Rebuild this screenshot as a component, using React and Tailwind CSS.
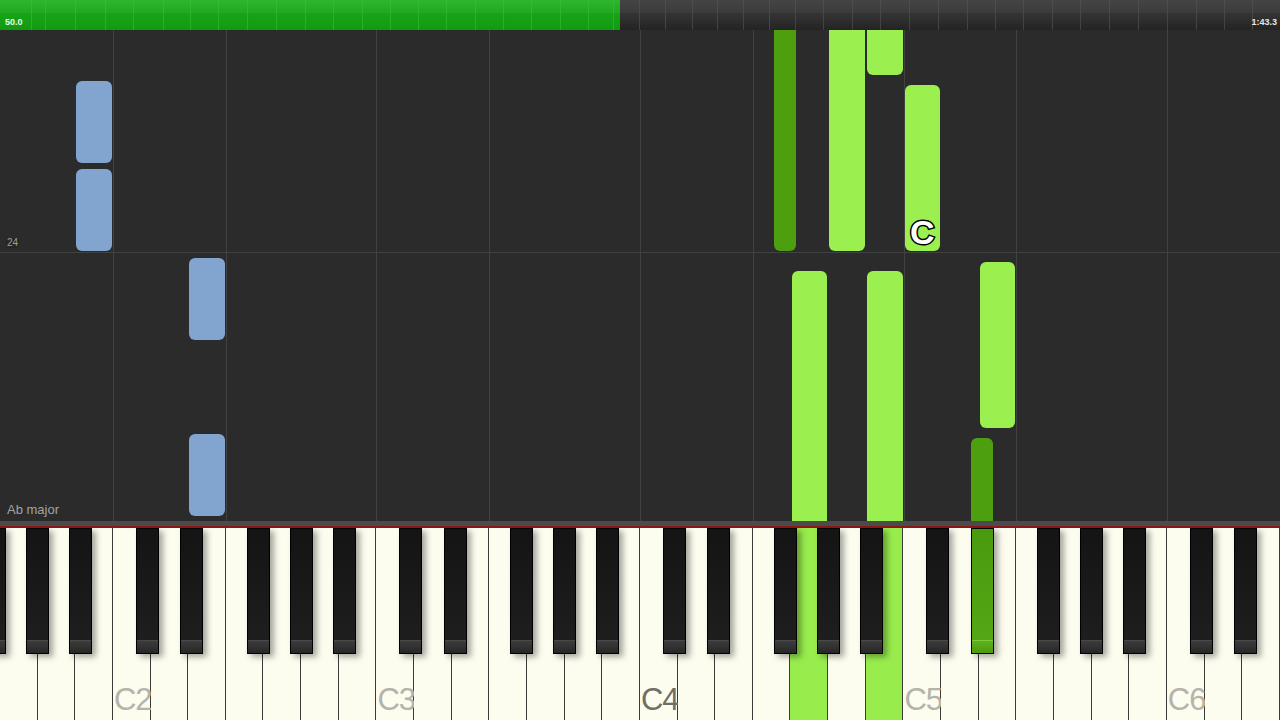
import React from "react";

const W = 1280 / 34;
const WHITE_NAMES = ["G", "A", "B"];
for (let o = 0; o < 4; o++) WHITE_NAMES.push("C", "D", "E", "F", "G", "A", "B");
WHITE_NAMES.push("C", "D", "E");

const BLACK_OFF = { C: -3.5, D: 3.5, F: -5.5, G: 0, A: 5.5 };

const blackKeys = [{ center: -5.5, id: "f#1" }];
WHITE_NAMES.forEach((n, i) => {
  if (BLACK_OFF[n] !== undefined && i < 33) {
    blackKeys.push({ center: (i + 1) * W + BLACK_OFF[n], id: n + i });
  }
});

const LABELS = { 3: "C2", 10: "C3", 17: "C4", 24: "C5", 31: "C6" };
const GREEN_WHITE = new Set([21, 23]);
const GREEN_BLACK_CENTER = 26 * W + 3.5;

const DIVIDERS = [31, 45, 75, 105, 133, 163, 190, 218, 247, 276, 305, 333, 362, 390, 418, 446, 475, 503, 531, 560, 588, 613, 639, 665, 692, 717, 743, 769, 795, 823, 852, 880, 909, 938, 967, 995, 1023, 1052, 1080, 1109, 1138, 1167, 1196, 1224, 1252];

const GRID_X = [3, 6, 10, 13, 17, 20, 24, 27, 31].map((i) => i * W);

const wNote = (i) => ({ left: i * W + 1, width: W - 2 });
const bNote = (c) => ({ left: c - 11, width: 22 });

const TOP = 30;
const notes = [
  { ...wNote(2), y1: 81, y2: 163, c: "blue" },
  { ...wNote(2), y1: 169, y2: 251, c: "blue" },
  { ...wNote(5), y1: 258, y2: 340, c: "blue" },
  { ...wNote(5), y1: 434, y2: 516, c: "blue" },
  { ...bNote(21 * W - 5.5), y1: 10, y2: 251, c: "dark" },
  { ...wNote(22), y1: 10, y2: 251, c: "light" },
  { ...wNote(23), y1: 10, y2: 75, c: "light" },
  { ...wNote(23), y1: 271, y2: 540, c: "light" },
  { ...wNote(24), y1: 85, y2: 251, c: "light", label: "C" },
  { ...wNote(21), y1: 271, y2: 540, c: "light" },
  { ...wNote(26), y1: 262, y2: 428, c: "light" },
  { ...bNote(GREEN_BLACK_CENTER), y1: 438, y2: 540, c: "dark" },
];

const NOTE_CLS = {
  blue: "bg-[#82a5cf]",
  light: "bg-[#9bef4e]",
  dark: "bg-[#4e9f10]",
};

function TopBar() {
  return (
    <div className="relative h-[30px] w-full overflow-hidden bg-gradient-to-b from-[#3d3d3d] via-[#333333] to-[#232323]">
      <div className="absolute left-0 top-0 h-full w-[620px] bg-gradient-to-b from-[#25b425] via-[#16a316] to-[#119a11]" />
      <div className="absolute left-0 top-0 h-[13px] w-full bg-white/[0.04]" />
      {DIVIDERS.map((x) => (
        <div
          key={x}
          className={`absolute top-0 h-full w-px ${x < 620 ? "bg-[#40c040]/50" : "bg-[#555555]/60"}`}
          style={{ left: x }}
        />
      ))}
      <div className="relative flex h-full items-end justify-between pb-[3px] pl-[5px] pr-[3px] text-[9px] font-bold leading-none [font-family:'Liberation_Sans',sans-serif]">
        <span className="text-[#eaffea]">50.0</span>
        <span className="text-[#e6e6e6]">1:43.3</span>
      </div>
    </div>
  );
}

function Roll() {
  return (
    <div className="relative h-[491px] w-full overflow-hidden bg-[#2b2b2b]">
      {GRID_X.map((x) => (
        <div key={x} className="absolute top-0 h-full w-px bg-[#414141]" style={{ left: Math.round(x) }} />
      ))}
      <div className="absolute left-0 top-[222px] h-px w-full bg-[#414141]" />
      <div className="relative flex h-full flex-col items-start pb-[5px] pl-[6px] pt-[208px] [font-family:'Liberation_Sans',sans-serif]">
        <span className="rounded-sm bg-[#262626] px-[1px] text-[10px] leading-none text-[#9e9e9e]">24</span>
        <span className="mt-auto pl-[1px] text-[13px] leading-none text-[#a4a4a4]">Ab major</span>
      </div>
      {notes.map((n, k) => (
        <div
          key={k}
          className={`absolute flex items-end justify-center rounded-[6px] ${NOTE_CLS[n.c]}`}
          style={{ left: n.left, width: n.width, top: n.y1 - TOP, height: n.y2 - n.y1 }}
        >
          {n.label && (
            <span className="mb-[2px] text-[34px] font-bold leading-none text-white [-webkit-text-stroke:3px_black] [paint-order:stroke_fill] [font-family:'Liberation_Sans',sans-serif]">
              {n.label}
            </span>
          )}
        </div>
      ))}
    </div>
  );
}

function Keyboard() {
  return (
    <div className="w-full">
      <div className="h-[5px] w-full bg-[#4b4b4b]" />
      <div className="h-[2px] w-full bg-[#8c1616]" />
      <div className="relative h-[192px] w-full overflow-hidden">
        <div className="flex h-full w-full">
          {WHITE_NAMES.map((n, i) => (
            <div
              key={i}
              className={`flex h-full shrink-0 items-end border-r border-[#3a3a36] pb-[5px] pl-[1px] ${GREEN_WHITE.has(i) ? "bg-[#98ec4c]" : "bg-[#fcfcef]"}`}
              style={{ width: W }}
            >
              {LABELS[i] && (
                <span
                  className={`text-[31px] leading-none tracking-[-1px] [font-family:'Liberation_Sans',sans-serif] ${
                    i === 17 ? "text-[#6f6f68]" : "text-[#b4b4aa]"
                  }`}
                >
                  {LABELS[i]}
                </span>
              )}
            </div>
          ))}
        </div>
        {blackKeys.map((b) => {
          const green = Math.abs(b.center - GREEN_BLACK_CENTER) < 1;
          return (
            <div
              key={b.id}
              className={`absolute top-0 flex h-[126px] w-[23px] flex-col justify-end border border-black shadow-[4px_3px_6px_rgba(0,0,0,0.35)] ${
                green ? "bg-gradient-to-b from-[#4a9a0e] to-[#56a816]" : "bg-gradient-to-b from-[#141414] to-[#1f1f1f]"
              }`}
              style={{ left: b.center - 11.5 }}
            >
              <div
                className={`h-[13px] w-full border-t px-[3px] ${
                  green ? "border-[#7acc36] bg-gradient-to-b from-[#5fb21c] to-[#4c9a10]" : "border-[#4a4a4a] bg-gradient-to-b from-[#3c3c3c] to-[#272727]"
                }`}
              />
            </div>
          );
        })}
      </div>
    </div>
  );
}

export default function App() {
  return (
    <div className="flex h-[720px] w-[1280px] flex-col overflow-hidden bg-[#2b2b2b]">
      <TopBar />
      <Roll />
      <Keyboard />
    </div>
  );
}
